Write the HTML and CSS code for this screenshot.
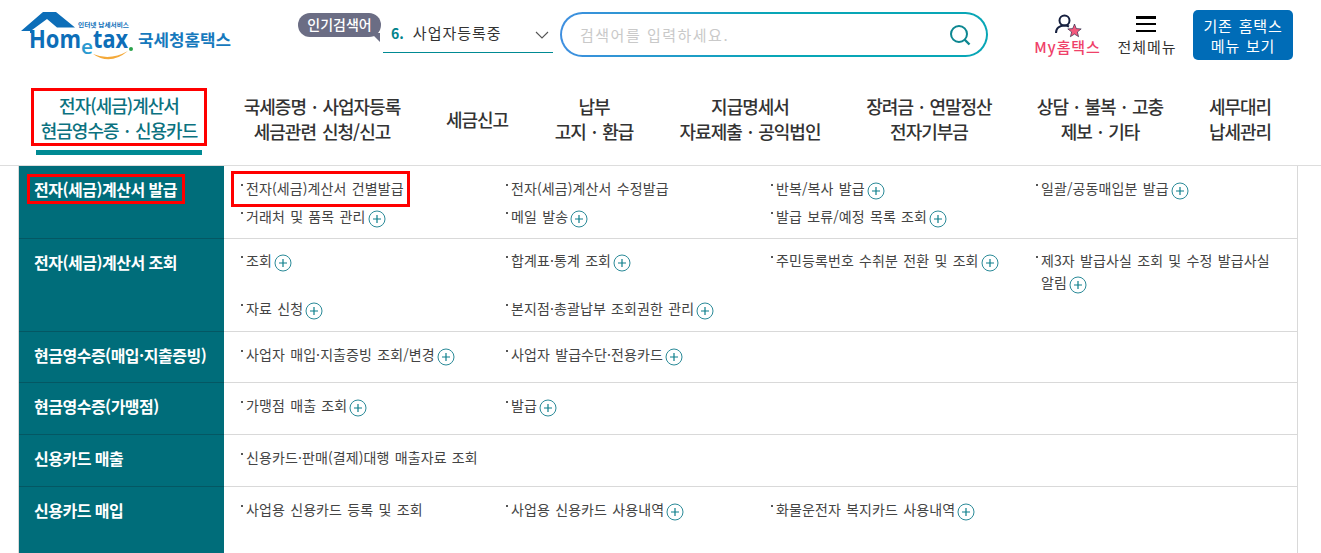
FILE: index.html
```html
<!DOCTYPE html>
<html lang="ko">
<head>
    <meta charset="UTF-8">
    <meta name="viewport" content="width=device-width, initial-scale=1.0">
    <title>국세청 홈택스</title>
    <link rel="stylesheet" href="styles.css">
</head>
<body>
    <svg class="defs" width="0" height="0">
        <symbol id="plus" viewBox="0 0 18 18">
            <circle cx="9" cy="9" r="8" fill="none" stroke="#2a8a98" stroke-width="1"/>
            <path d="M9 5v8M5 9h8" fill="none" stroke="#0d7f8b" stroke-width="1.200"/>
        </symbol>
    </svg>

    <header class="top">
        <a class="logo">
            <svg width="214" height="50" viewBox="0 0 214 50">
                <path d="M1 19 L23 0 H36 L55 15.500 H37 L27 7 L12 18 V21 H10 V19 Z" fill="#0d6eb8"/>
                <text class="logo-small" x="58" y="15" textLength="51" lengthAdjust="spacingAndGlyphs">인터넷 납세서비스</text>
                <text class="logo-word" x="9" y="36" textLength="52" lengthAdjust="spacingAndGlyphs">Hom</text>
                <text class="logo-e" x="61" y="42" textLength="12" lengthAdjust="spacingAndGlyphs">e</text>
                <text class="logo-word" x="73" y="36" textLength="35" lengthAdjust="spacingAndGlyphs">tax</text>
                <circle cx="111" cy="37" r="2" fill="#2aa24a"/>
                <path d="M73 42 Q90 49 108 39 Q90 54 73 42 Z" fill="#f4a93a"/>
                <text class="logo-name" x="118" y="34" textLength="93" lengthAdjust="spacingAndGlyphs">국세청홈택스</text>
            </svg>
        </a>

        <div class="popular">
            <span class="pill">인기검색어</span>
            <div class="rank">
                <b>6.</b><span>사업자등록중</span>
                <svg class="chev" width="14" height="8" viewBox="0 0 14 8"><path d="M1 1l6 6 6-6" fill="none" stroke="#555" stroke-width="1.100"/></svg>
            </div>
        </div>

        <div class="search">
            <span class="holder">검색어를 입력하세요.</span>
            <svg width="22" height="22" viewBox="0 0 22 22">
                <circle cx="10" cy="10" r="8" fill="none" stroke="#0c8791" stroke-width="2"/>
                <path d="M15.500 15.500l5 5" stroke="#0c8791" stroke-width="2.400"/>
            </svg>
        </div>

        <div class="tools">
            <a class="tool my">
                <svg width="29" height="24" viewBox="0 0 29 24">
                    <circle cx="11.500" cy="6.500" r="5" fill="none" stroke="#16203f" stroke-width="2"/>
                    <path d="M3 19c0-5 4-7.500 8.500-7.500 2 0 3.500.5 4.500 1" fill="none" stroke="#16203f" stroke-width="2"/>
                    <path d="M21.500 10l1.800 4.600 4.900.3-3.800 3.100 1.200 4.700-4.100-2.600-4.100 2.600 1.200-4.700-3.800-3.100 4.900-.3z" fill="#f4597d" stroke="#16203f" stroke-width=".6"/>
                </svg>
                <span>My홈택스</span>
            </a>
            <a class="tool all">
                <span class="burger"><i></i><i></i><i></i></span>
                <span>전체메뉴</span>
            </a>
            <a class="old-menu">기존 홈택스<br>메뉴 보기</a>
        </div>
    </header>

    <nav class="gnb">
        <a class="on"><span class="boxed">전자(세금)계산서<br>현금영수증 · 신용카드</span></a>
        <a>국세증명 · 사업자등록<br>세금관련 신청/신고</a>
        <a>세금신고</a>
        <a>납부<br>고지 · 환급</a>
        <a>지급명세서<br>자료제출 · 공익법인</a>
        <a>장려금 · 연말정산<br>전자기부금</a>
        <a>상담 · 불복 · 고충<br>제보 · 기타</a>
        <a>세무대리<br>납세관리</a>
    </nav>

    <main class="menu">
        <section class="row row-issue">
            <h2><span class="mark-side">전자(세금)계산서 발급</span></h2>
            <ul>
                <li><span class="mark-item">전자(세금)계산서 건별발급</span></li>
                <li>전자(세금)계산서 수정발급</li>
                <li>반복/복사 발급<svg class="plus"><use href="#plus"/></svg></li>
                <li>일괄/공동매입분 발급<svg class="plus"><use href="#plus"/></svg></li>
                <li>거래처 및 품목 관리<svg class="plus"><use href="#plus"/></svg></li>
                <li>메일 발송<svg class="plus"><use href="#plus"/></svg></li>
                <li>발급 보류/예정 목록 조회<svg class="plus"><use href="#plus"/></svg></li>
            </ul>
        </section>
        <section class="row row-lookup">
            <h2>전자(세금)계산서 조회</h2>
            <ul>
                <li>조회<svg class="plus"><use href="#plus"/></svg></li>
                <li>합계표·통계 조회<svg class="plus"><use href="#plus"/></svg></li>
                <li>주민등록번호 수취분 전환 및 조회<svg class="plus"><use href="#plus"/></svg></li>
                <li>제3자 발급사실 조회 및 수정 발급사실 알림<svg class="plus"><use href="#plus"/></svg></li>
                <li>자료 신청<svg class="plus"><use href="#plus"/></svg></li>
                <li>본지점·총괄납부 조회권한 관리<svg class="plus"><use href="#plus"/></svg></li>
            </ul>
        </section>
        <section class="row row-cash">
            <h2>현금영수증(매입·지출증빙)</h2>
            <ul>
                <li>사업자 매입·지출증빙 조회/변경<svg class="plus"><use href="#plus"/></svg></li>
                <li>사업자 발급수단·전용카드<svg class="plus"><use href="#plus"/></svg></li>
            </ul>
        </section>
        <section class="row">
            <h2>현금영수증(가맹점)</h2>
            <ul>
                <li>가맹점 매출 조회<svg class="plus"><use href="#plus"/></svg></li>
                <li>발급<svg class="plus"><use href="#plus"/></svg></li>
            </ul>
        </section>
        <section class="row">
            <h2>신용카드 매출</h2>
            <ul>
                <li class="wide">신용카드·판매(결제)대행 매출자료 조회</li>
            </ul>
        </section>
        <section class="row row-last">
            <h2>신용카드 매입</h2>
            <ul>
                <li>사업용 신용카드 등록 및 조회</li>
                <li>사업용 신용카드 사용내역<svg class="plus"><use href="#plus"/></svg></li>
                <li>화물운전자 복지카드 사용내역<svg class="plus"><use href="#plus"/></svg></li>
            </ul>
        </section>
    </main>
</body>
</html>
```

FILE: styles.css
```css
/* Reset */
* {
    margin: 0;
    padding: 0;
    box-sizing: border-box;
}

html, body {
    height: 553px;
    overflow: hidden;
}

body {
    font-family: "Noto Sans CJK KR", "Noto Sans", sans-serif;
    color: #333;
    background: #fff;
}

.defs {
    position: absolute;
}

/* Header */
.top {
    display: flex;
    height: 88px;
    padding: 10px 28px 0 20px;
}

.logo {
    width: 214px;
    height: 50px;
    margin-top: 2px;
}

.logo svg {
    display: block;
}

.logo-small {
    font-size: 6px;
    font-weight: 700;
    fill: #0d6eb8;
}

.logo-word {
    font-family: "Open Sans", sans-serif;
    font-size: 25px;
    font-weight: 700;
    fill: #0d6eb8;
}

.logo-e {
    font-family: "Open Sans", sans-serif;
    font-size: 20px;
    font-weight: 600;
    fill: #2a9ad0;
}

.logo-name {
    font-size: 16px;
    font-weight: 700;
    fill: #1679bd;
}

/* Popular keyword */
.popular {
    position: relative;
    width: 255px;
    margin-left: 64px;
    height: 43px;
}

.pill {
    position: absolute;
    left: 0;
    top: 3px;
    width: 83px;
    height: 24px;
    border-radius: 12px;
    background: #6b6d84;
    color: #fff;
    font-size: 14px;
    font-weight: 500;
    line-height: 23px;
    text-align: center;
}

.pill::after {
    content: "";
    position: absolute;
    right: 1px;
    bottom: -5px;
    width: 9px;
    height: 9px;
    background: #6b6d84;
    clip-path: polygon(100% 0, 100% 100%, 0 0);
}

.rank {
    position: absolute;
    left: 85px;
    top: 9px;
    width: 170px;
    height: 34px;
    border-bottom: 1px solid #008a93;
    padding-left: 8px;
    font-size: 14px;
    line-height: 28px;
    color: #333;
}

.rank span {
    font-size: 15px;
    letter-spacing: 1px;
}

.rank b {
    color: #00838c;
    margin-right: 9px;
}

.chev {
    position: absolute;
    right: 4px;
    top: 12px;
}

/* Search */
.search {
    display: flex;
    align-items: center;
    justify-content: space-between;
    width: 428px;
    height: 45px;
    margin: 2px 0 0 7px;
    padding: 0 15px 0 18px;
    border: 2px solid transparent;
    border-radius: 23px;
    background: linear-gradient(#fff, #fff) padding-box,
                linear-gradient(to right, #3f8fe0, #08a6b6 50%, #08a6b6) border-box;
}

.holder {
    color: #c9c9c9;
    font-size: 15px;
    letter-spacing: 1.500px;
}

/* Tools */
.tools {
    display: flex;
    margin-left: 46px;
}

.tool {
    display: flex;
    flex-direction: column;
    align-items: center;
    width: 67px;
    font-size: 15px;
    line-height: 20px;
    letter-spacing: .9px;
    margin-top: 4px;
    color: #333;
    white-space: nowrap;
}

.tool svg {
    height: 24px;
    margin-bottom: -1px;
}

.my {
    color: #ef4169;
    font-weight: 500;
}

.burger {
    display: flex;
    flex-direction: column;
    justify-content: space-between;
    width: 20px;
    height: 16px;
    margin: 2px 3px 5px 0;
}

.burger i {
    height: 2.500px;
    background: #000;
}

.all {
    width: 60px;
    margin-left: 16px;
}

.old-menu {
    width: 100px;
    height: 50px;
    margin-left: 16px;
    padding-top: 6px;
    border-radius: 5px;
    background: #006cb7;
    color: #fff;
    font-size: 15px;
    line-height: 20px;
    letter-spacing: .8px;
    word-spacing: 1px;
    text-align: center;
}

/* Main nav */
.gnb {
    display: grid;
    grid-template-columns: 176px 230px 80px 154px 158px 200px 142px 138px;
    height: 77px;
    margin-left: 31px;
    font-size: 18px;
    font-weight: 500;
    line-height: 25px;
    letter-spacing: -1px;
    word-spacing: 2px;
    color: #333;
    text-align: center;
}

.gnb a {
    display: flex;
    align-items: center;
    justify-content: center;
    height: 62px;
}

.gnb .on {
    position: relative;
    color: #0b7280;
    height: 58px;
}

.boxed {
    display: flex;
    align-items: center;
    justify-content: center;
    width: 100%;
    height: 58px;
    padding-top: 1px;
    border: 3px solid #f00;
}

.gnb .on::after {
    content: "";
    position: absolute;
    left: 5px;
    right: 5px;
    top: 62px;
    height: 5px;
    background: #008a93;
}

/* Menu table */
.menu {
    border-top: 1px solid #ddd;
    height: 388px;
}

.row {
    display: grid;
    grid-template-columns: 205px 1fr;
    width: 1280px;
    height: 52px;
    margin-left: 18px;
    border-left: 1px solid #d9d9d9;
    border-right: 1px solid #d9d9d9;
    border-bottom: 1px solid #d9d9d9;
}

.row-issue {
    height: 73px;
}

.row-lookup {
    height: 93px;
}

.row-cash {
    height: 51px;
}

.row-last {
    height: 66px;
    border-bottom: 0;
}

.row h2 {
    margin-bottom: -1px;
    padding: 11px 15px 0;
    background: #006d7a;
    border-bottom: 1px solid #045763;
    color: #fff;
    font-size: 16px;
    font-weight: 700;
    line-height: 25px;
    letter-spacing: -.5px;
}

.row ul {
    display: grid;
    grid-template-columns: repeat(4, 265px);
    grid-auto-rows: min-content;
    row-gap: 4px;
    padding: 11px 0 0 16px;
    list-style: none;
    font-size: 14px;
    line-height: 22px;
    letter-spacing: .1px;
    word-spacing: 1.200px;
    word-break: keep-all;
    color: #444;
}

.row-lookup ul {
    padding-top: 10px;
}

.row li {
    position: relative;
    min-height: 24px;
    padding: 0 12px 0 6px;
}

.row li::before {
    content: "";
    position: absolute;
    left: 1px;
    top: 7px;
    width: 2px;
    height: 2px;
    background: #555;
}

.row .wide {
    grid-column: span 2;
}

.plus {
    width: 18px;
    height: 18px;
    margin: -4px 0 -4px 2px;
    vertical-align: -2px;
}

/* Red guide boxes */
.mark-side {
    display: inline-block;
    margin: -3px 0 0 -7px;
    padding: 0 5px 0 4px;
    border: 3px solid #f00;
    line-height: 24px;
}

.mark-item {
    position: relative;
}

.mark-item::after {
    content: "";
    position: absolute;
    left: -15px;
    right: -6px;
    top: -7px;
    height: 30px;
    border: 3px solid #f00;
}
```
